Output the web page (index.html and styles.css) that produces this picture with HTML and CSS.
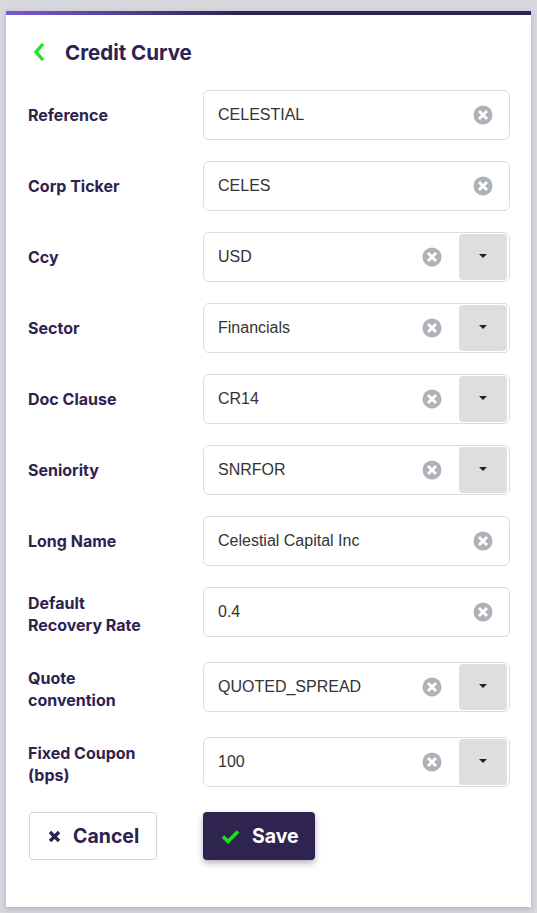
FILE: index.html
```html
<!DOCTYPE html>
<html lang="en">
<head>
    <meta charset="UTF-8">
    <meta name="viewport" content="width=device-width, initial-scale=1.0">
    <title>Credit Curve</title>
    <link rel="stylesheet" href="styles.css">
</head>
<body>
    <div class="card">
        <div class="header">
            <svg class="back" width="14" height="20" viewBox="0 0 14 20"><polyline points="11,2 4,10 11,18" fill="none" stroke="#1ee61e" stroke-width="3.4"/></svg>
            <h1>Credit Curve</h1>
        </div>

        <div class="form">
            <div class="row">
                <label>Reference</label>
                <div class="field"><span class="value">CELESTIAL</span><svg class="clear" viewBox="0 0 20 20"><circle cx="10" cy="10" r="9.5"/><path d="M6 6 L14 14 M14 6 L6 14"/></svg></div>
            </div>
            <div class="row">
                <label>Corp Ticker</label>
                <div class="field"><span class="value">CELES</span><svg class="clear" viewBox="0 0 20 20"><circle cx="10" cy="10" r="9.5"/><path d="M6 6 L14 14 M14 6 L6 14"/></svg></div>
            </div>
            <div class="row">
                <label>Ccy</label>
                <div class="field select"><span class="value">USD</span><svg class="clear" viewBox="0 0 20 20"><circle cx="10" cy="10" r="9.5"/><path d="M6 6 L14 14 M14 6 L6 14"/></svg><span class="arrow"></span></div>
            </div>
            <div class="row">
                <label>Sector</label>
                <div class="field select"><span class="value">Financials</span><svg class="clear" viewBox="0 0 20 20"><circle cx="10" cy="10" r="9.5"/><path d="M6 6 L14 14 M14 6 L6 14"/></svg><span class="arrow"></span></div>
            </div>
            <div class="row">
                <label>Doc Clause</label>
                <div class="field select"><span class="value">CR14</span><svg class="clear" viewBox="0 0 20 20"><circle cx="10" cy="10" r="9.5"/><path d="M6 6 L14 14 M14 6 L6 14"/></svg><span class="arrow"></span></div>
            </div>
            <div class="row">
                <label>Seniority</label>
                <div class="field select"><span class="value">SNRFOR</span><svg class="clear" viewBox="0 0 20 20"><circle cx="10" cy="10" r="9.5"/><path d="M6 6 L14 14 M14 6 L6 14"/></svg><span class="arrow"></span></div>
            </div>
            <div class="row">
                <label>Long Name</label>
                <div class="field"><span class="value">Celestial Capital Inc</span><svg class="clear" viewBox="0 0 20 20"><circle cx="10" cy="10" r="9.5"/><path d="M6 6 L14 14 M14 6 L6 14"/></svg></div>
            </div>
            <div class="row">
                <label>Default<br>Recovery Rate</label>
                <div class="field"><span class="value">0.4</span><svg class="clear" viewBox="0 0 20 20"><circle cx="10" cy="10" r="9.5"/><path d="M6 6 L14 14 M14 6 L6 14"/></svg></div>
            </div>
            <div class="row">
                <label>Quote<br>convention</label>
                <div class="field select"><span class="value">QUOTED_SPREAD</span><svg class="clear" viewBox="0 0 20 20"><circle cx="10" cy="10" r="9.5"/><path d="M6 6 L14 14 M14 6 L6 14"/></svg><span class="arrow"></span></div>
            </div>
            <div class="row">
                <label>Fixed Coupon<br>(bps)</label>
                <div class="field select"><span class="value">100</span><svg class="clear" viewBox="0 0 20 20"><circle cx="10" cy="10" r="9.5"/><path d="M6 6 L14 14 M14 6 L6 14"/></svg><span class="arrow"></span></div>
            </div>
        </div>

        <div class="actions">
            <button class="btn cancel">
                <svg width="13" height="13" viewBox="0 0 13 13"><path d="M2 2 L11 11 M11 2 L2 11" stroke="#2d2250" stroke-width="3.4"/></svg>
                Cancel
            </button>
            <button class="btn save">
                <svg width="19" height="15" viewBox="0 0 19 15"><polyline points="2,7.5 7,12.5 17,2.5" fill="none" stroke="#16e616" stroke-width="3.6"/></svg>
                Save
            </button>
        </div>
    </div>
</body>
</html>
```

FILE: styles.css
```css
*{
    margin: 0;
    padding: 0;
    box-sizing: border-box;
}

body{
    background-color: #d9d8de;
    font-family: Inter, "Noto Sans", sans-serif;
    color: #2d2250;
    padding: 11px 6px;
}

.card{
    background-color: #fff;
    border-top: 4px solid transparent;
    border-image: linear-gradient(90deg, #7a5ad8, #2d2250 45%) 1;
    box-shadow: 0 2px 6px rgba(60, 50, 90, 0.25);
    padding: 0 21px 47px 22px;
}

.header{
    display: flex;
    align-items: center;
    height: 75px;
    padding-left: 4px;
    padding-bottom: 1px;
}

.back{
    margin-right: 19px;
}

.header h1{
    font-size: 20.5px;
    font-weight: 700;
}

.form{
    display: flex;
    flex-direction: column;
    gap: 21px;
}

.row{
    display: flex;
    align-items: flex-start;
}

.row label{
    width: 175px;
    min-height: 50px;
    padding: 5px 0;
    display: flex;
    align-items: center;
    font-size: 16px;
    font-weight: 700;
    line-height: 22px;
}

.field{
    flex: 1;
    height: 50px;
    border: 1px solid #dcdcdc;
    border-radius: 6px;
    display: flex;
    align-items: center;
    padding: 0 2px 0 14px;
    font-family: "Liberation Sans", Arial, sans-serif;
    font-size: 16px;
    color: #333;
}

.value{
    flex: 1;
}

.clear{
    width: 20px;
    height: 20px;
    margin-right: 14px;
}

.clear circle{
    fill: #adb1b8;
}

.clear path{
    stroke: #fff;
    stroke-width: 2.9;
}

.select .clear{
    margin-right: 17px;
}

.arrow{
    width: 48px;
    height: 46px;
    background-color: #dedede;
    border-radius: 4px;
    position: relative;
}

.arrow::after{
    content: "";
    position: absolute;
    left: 20px;
    top: 20px;
    border-left: 4px solid transparent;
    border-right: 4px solid transparent;
    border-top: 4px solid #222;
}

.actions{
    display: flex;
    gap: 46px;
    margin-top: 21px;
    padding-left: 1px;
}

.btn{
    height: 48px;
    border-radius: 4px;
    font-family: Inter, "Noto Sans", sans-serif;
    font-size: 19.5px;
    font-weight: 700;
    display: flex;
    align-items: center;
    gap: 12px;
    cursor: pointer;
}

.cancel{
    width: 128px;
    background-color: #fff;
    border: 1px solid #d4d4d8;
    color: #2d2250;
    padding-left: 18px;
}

.save{
    width: 112px;
    background-color: #2f2350;
    border: none;
    color: #fff;
    padding-left: 18px;
    box-shadow: 0 3px 6px rgba(40, 30, 70, 0.35);
}
```
